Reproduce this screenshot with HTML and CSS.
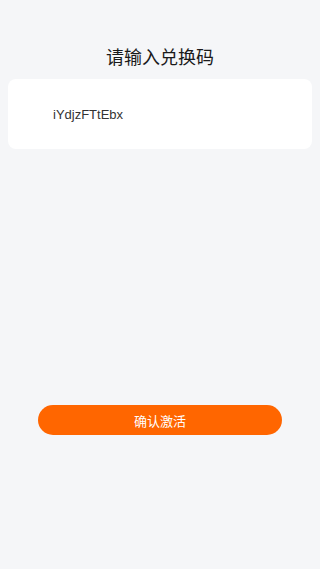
FILE: index.html
```html
<!DOCTYPE html>
<html lang="zh">
<head>
<meta charset="utf-8">
<meta name="viewport" content="width=device-width, initial-scale=1">
<link rel="stylesheet" href="styles.css">
</head>
<body>
<div class="page">
  <h1 class="title">请输入兑换码</h1>
  <div class="card">
    <span class="code">iYdjzFTtEbx</span>
  </div>
  <div class="spacer"></div>
  <button class="btn">确认激活</button>
</div>
</body>
</html>
```

FILE: styles.css
```css
html, body {
  margin: 0;
  padding: 0;
  background: #f5f6f8;
}
body {
  font-family: "Liberation Sans", "Noto Sans CJK SC", sans-serif;
  color: #222;
}
.page {
  width: 320px;
  height: 569px;
  display: flex;
  flex-direction: column;
  align-items: center;
  box-sizing: border-box;
  padding-top: 45px;
}
.title {
  margin: 0;
  font-size: 18px;
  font-weight: normal;
  line-height: 26px;
  color: #1a1a1a;
}
.card {
  margin-top: 8px;
  width: 304px;
  height: 70px;
  background: #ffffff;
  border-radius: 8px;
  box-sizing: border-box;
  padding-left: 45px;
  display: flex;
  align-items: center;
}
.code {
  font-size: 13px;
  color: #333;
}
.spacer {
  height: 256px;
}
.btn {
  width: 244px;
  height: 30px;
  border: none;
  border-radius: 15px;
  background: #ff6600;
  color: #ffffff;
  font-family: "Liberation Sans", "Noto Sans CJK SC", sans-serif;
  font-size: 13px;
  padding: 0;
}
```
